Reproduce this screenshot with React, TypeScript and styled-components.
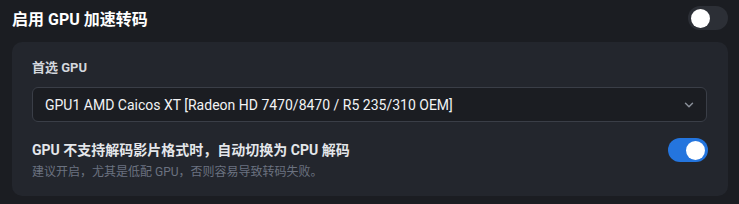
import * as React from 'react';
import styled, {createGlobalStyle} from 'styled-components';

const GlobalStyle = createGlobalStyle`
    html, body {
        margin: 0;
        padding: 0;
        background: #1b1d22;
    }

    body {
        font-family: Roboto, "Noto Sans CJK SC", sans-serif;
        color: #f2f3f5;
    }
`;

const Page = styled.div`
    width: 739px;
    height: 204px;
    box-sizing: border-box;
    padding: 6px 11px 0 12px;
    display: flex;
    flex-direction: column;
    gap: 12px;
`;

const Header = styled.div`
    display: flex;
    align-items: center;
    justify-content: space-between;
    height: 24px;
`;

const Title = styled.h2`
    margin: 0;
    font-size: 16px;
    font-weight: 700;
    color: #ffffff;
`;

const Card = styled.div`
    background: #23262d;
    border-radius: 10px;
    padding: 17px 20px 15px 20px;
    display: flex;
    flex-direction: column;
`;

const Label = styled.div`
    font-size: 13px;
    font-weight: 700;
    color: #d3d6dc;
    line-height: 18px;
    margin-bottom: 10px;
`;

const SelectBox = styled.div`
    height: 35px;
    box-sizing: border-box;
    margin-right: 1px;
    border: 1px solid #3a3e47;
    border-radius: 6px;
    background: #1b1d22;
    display: flex;
    align-items: center;
    justify-content: space-between;
    padding: 0 10px 0 12px;
    font-size: 14px;
    color: #f2f3f5;
`;

const Chevron = styled.svg`
    width: 14px;
    height: 14px;
    color: #8a8f99;
`;

const OptionRow = styled.div`
    margin-top: 18px;
    display: flex;
    align-items: flex-start;
    justify-content: space-between;
`;

const OptionText = styled.div`
    display: flex;
    flex-direction: column;
    gap: 4px;
`;

const OptionTitle = styled.div`
    font-size: 14px;
    font-weight: 700;
    color: #e4e6ea;
    line-height: 20px;
`;

const OptionDesc = styled.div`
    font-size: 12px;
    color: #6b7280;
    line-height: 17px;
`;

const Track = styled.div<{$on: boolean}>`
    width: 40px;
    height: 24px;
    border-radius: 12px;
    box-sizing: border-box;
    padding: 2px 3px;
    background: ${p => (p.$on ? '#2475de' : '#2c2f36')};
    display: flex;
    justify-content: ${p => (p.$on ? 'flex-end' : 'flex-start')};
    align-items: center;
    flex-shrink: 0;
`;

const RowToggle = styled.div`
    margin-top: -2px;
`;

const Knob = styled.div`
    width: 19px;
    height: 19px;
    border-radius: 50%;
    background: #ffffff;
`;

const Toggle = ({on}: {on: boolean}) => (
    <Track $on={on}>
        <Knob />
    </Track>
);

export default function App() {
    return (
        <>
            <GlobalStyle />
            <Page>
                <Header>
                    <Title>启用 GPU 加速转码</Title>
                    <Toggle on={false} />
                </Header>

                <Card>
                    <Label>首选 GPU</Label>
                    <SelectBox>
                        <span>GPU1 AMD Caicos XT [Radeon HD 7470/8470 / R5 235/310 OEM]</span>
                        <Chevron viewBox="0 0 24 24" fill="none" stroke="currentColor" strokeWidth="2.5" strokeLinecap="round" strokeLinejoin="round">
                            <path d="M6 9l6 6 6-6" />
                        </Chevron>
                    </SelectBox>

                    <OptionRow>
                        <OptionText>
                            <OptionTitle>GPU 不支持解码影片格式时，自动切换为 CPU 解码</OptionTitle>
                            <OptionDesc>建议开启，尤其是低配 GPU，否则容易导致转码失败。</OptionDesc>
                        </OptionText>
                        <RowToggle>
                            <Toggle on={true} />
                        </RowToggle>
                    </OptionRow>
                </Card>
            </Page>
        </>
    );
}
